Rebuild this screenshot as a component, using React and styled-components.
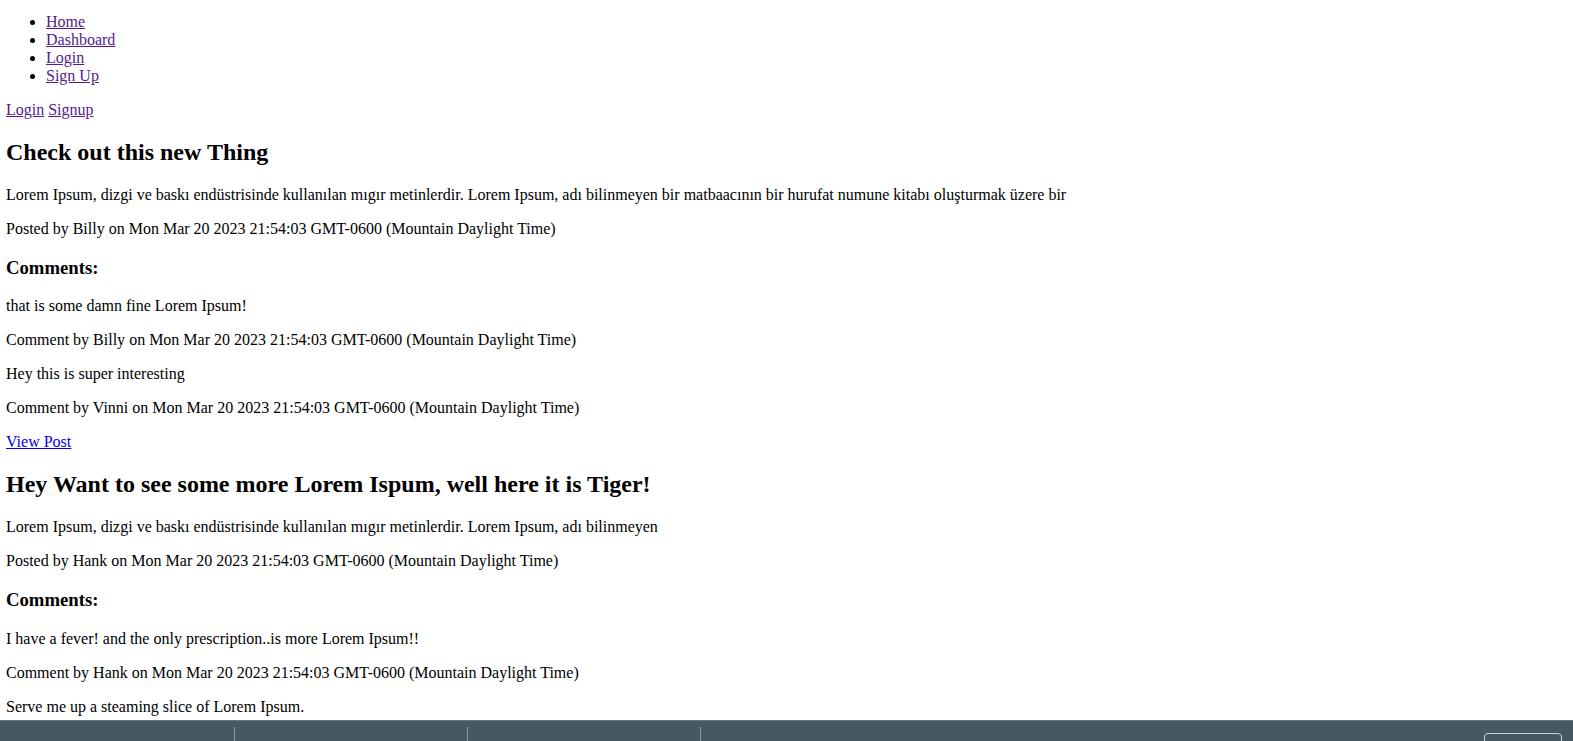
import React from "react";
import styled, { createGlobalStyle } from "styled-components";

const GlobalStyle = createGlobalStyle`
  html { overflow: hidden; }
  body {
    margin: 0;
    background: #fff;
    color: #000;
    font-family: "Liberation Serif", "Times New Roman", serif;
    font-size: 16px;
  }
`;

const Page = styled.div`
  padding: 0 6px;
  display: flow-root;
`;

const NavList = styled.ul`
  margin: 13px 0 16px;
  padding-left: 40px;
  list-style: disc;
`;

const Link = styled.a`
  color: ${(p) => (p.$visited ? "#551a8b" : "#0000ee")};
  text-decoration: underline;
  cursor: pointer;
`;

const AuthRow = styled.p`
  margin: 16px 0;
`;

const Title = styled.h2`
  font-size: 24px;
  font-weight: bold;
  margin: 19.92px 0;
`;

const Text = styled.p`
  margin: 16px 0;
`;

const CommentsHeading = styled.h3`
  font-size: 18.72px;
  font-weight: bold;
  margin: 18.72px 0;
`;

const Bar = styled.div`
  position: fixed;
  left: 0;
  right: 0;
  bottom: 0;
  height: 20px;
  border-top: 1px solid #66747b;
  background: #455961;
  display: flex;
  align-items: flex-start;
  padding-left: 2px;
  overflow: hidden;
`;

const Segment = styled.div`
  width: 232px;
  height: 30px;
  margin-top: 6px;
  border-right: 1px solid #8b9aa1;
`;

const BarButton = styled.button`
  margin-left: auto;
  margin-right: 11px;
  margin-top: 12px;
  width: 78px;
  height: 30px;
  border: 1px solid #c9d3d8;
  border-radius: 4px;
  background: transparent;
  padding: 0;
`;

const posts = [
  {
    title: "Check out this new Thing",
    body:
      "Lorem Ipsum, dizgi ve baskı endüstrisinde kullanılan mıgır metinlerdir. Lorem Ipsum, adı bilinmeyen bir matbaacının bir hurufat numune kitabı oluşturmak üzere bir",
    author: "Billy",
    comments: [
      { text: "that is some damn fine Lorem Ipsum!", author: "Billy" },
      { text: "Hey this is super interesting", author: "Vinni" },
    ],
    link: true,
  },
  {
    title: "Hey Want to see some more Lorem Ispum, well here it is Tiger!",
    body:
      "Lorem Ipsum, dizgi ve baskı endüstrisinde kullanılan mıgır metinlerdir. Lorem Ipsum, adı bilinmeyen",
    author: "Hank",
    comments: [
      { text: "I have a fever! and the only prescription..is more Lorem Ipsum!!", author: "Hank" },
      { text: "Serve me up a steaming slice of Lorem Ipsum.", author: null },
    ],
    link: false,
  },
];

const DATE = "Mon Mar 20 2023 21:54:03 GMT-0600 (Mountain Daylight Time)";

export default function App() {
  return (
    <>
      <GlobalStyle />
      <Page>
        <NavList>
          <li><Link $visited>Home</Link></li>
          <li><Link $visited>Dashboard</Link></li>
          <li><Link $visited>Login</Link></li>
          <li><Link $visited>Sign Up</Link></li>
        </NavList>
        <AuthRow>
          <Link $visited>Login</Link> <Link $visited>Signup</Link>
        </AuthRow>
        {posts.map((post) => (
          <div key={post.title}>
            <Title>{post.title}</Title>
            <Text>{post.body}</Text>
            <Text>Posted by {post.author} on {DATE}</Text>
            <CommentsHeading>Comments:</CommentsHeading>
            {post.comments.map((c) => (
              <React.Fragment key={c.text}>
                <Text>{c.text}</Text>
                {c.author && <Text>Comment by {c.author} on {DATE}</Text>}
              </React.Fragment>
            ))}
            {post.link && <Link>View Post</Link>}
          </div>
        ))}
      </Page>
      <Bar>
        <Segment />
        <Segment />
        <Segment />
        <BarButton aria-label="menu" />
      </Bar>
    </>
  );
}
